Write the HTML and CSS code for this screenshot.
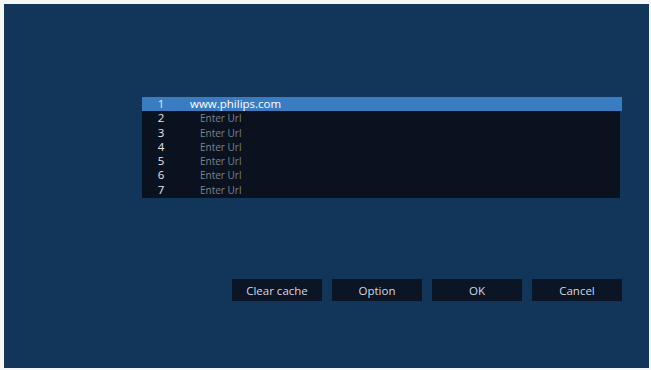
FILE: index.html
```html
<!doctype html>
<html lang="en">
<head>
	<meta charset="UTF-8">
	<title>Url list</title>
	<link rel="stylesheet" href="styles.css">
</head>
<body>
<div class="screen">
	<div class="list">
		<div class="row active"><span class="num">1</span><span class="url">www.philips.com</span></div>
		<div class="row"><span class="num">2</span><span class="url empty">Enter Url</span></div>
		<div class="row"><span class="num">3</span><span class="url empty">Enter Url</span></div>
		<div class="row"><span class="num">4</span><span class="url empty">Enter Url</span></div>
		<div class="row"><span class="num">5</span><span class="url empty">Enter Url</span></div>
		<div class="row"><span class="num">6</span><span class="url empty">Enter Url</span></div>
		<div class="row"><span class="num">7</span><span class="url empty">Enter Url</span></div>
	</div>

	<div class="buttons">
		<button type="button" class="btn">Clear cache</button>
		<button type="button" class="btn">Option</button>
		<button type="button" class="btn">OK</button>
		<button type="button" class="btn">Cancel</button>
	</div>
</div>
</body>
</html>
```

FILE: styles.css
```css
html, body{
	margin: 0;
	background: #f4f6f8;
}
.screen{
	margin: 4px 2px 2px 4px;
	height: 364px;
	background: #12355a;
	box-sizing: border-box;
	padding: 93px 27px 0 138px;
	font-family: "Open Sans", "Noto Sans", sans-serif;
}
.list{
	background: #0a1220;
	width: 478px;
	padding-bottom: 1px;
}
.row{
	display: flex;
	height: 14.3px;
	line-height: 14px;
	font-size: 11.5px;
	color: #d8dde4;
	overflow: hidden;
}
.row.active{
	background: #3a7cc2;
	width: 480px;
	color: #ffffff;
}
.num{
	width: 38px;
	text-align: center;
	font-size: 11.5px;
	color: #e4e8ee;
}
.url{
	padding-left: 10px;
}
.url.empty{
	padding-left: 20px;
	font-size: 10px;
	color: #7c838d;
}
.buttons{
	display: flex;
	justify-content: flex-end;
	gap: 10px;
	margin-top: 81px;
	margin-left: 90px;
}
.btn{
	width: 90px;
	height: 22px;
	border: none;
	background: #0b1526;
	color: #d4d9e0;
	font-family: "Open Sans", "Noto Sans", sans-serif;
	font-size: 11.5px;
	padding: 0;
}
```
